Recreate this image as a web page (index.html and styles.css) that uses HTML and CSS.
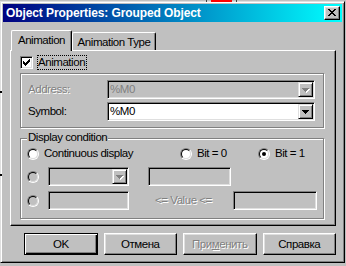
FILE: index.html
```html
<!DOCTYPE html>
<html>
<head>
<meta charset="utf-8">
<link rel="stylesheet" href="styles.css">
</head>
<body>
<div class="dialog">
  <div class="titlebar">
    <div class="title">Object Properties: Grouped Object</div>
    <div class="close">
      <svg width="8" height="7" viewBox="0 0 8 7" shape-rendering="crispEdges"><g fill="#000"><rect x="0" y="0" width="2" height="1"/><rect x="6" y="0" width="2" height="1"/><rect x="1" y="1" width="2" height="1"/><rect x="5" y="1" width="2" height="1"/><rect x="2" y="2" width="4" height="1"/><rect x="3" y="3" width="2" height="1"/><rect x="2" y="4" width="4" height="1"/><rect x="1" y="5" width="2" height="1"/><rect x="5" y="5" width="2" height="1"/><rect x="0" y="6" width="2" height="1"/><rect x="6" y="6" width="2" height="1"/></g></svg>
    </div>
  </div>
  <div class="content">
    <div class="tabs">
      <div class="tab tab-sel">Animation</div>
      <div class="tab tab-2">Animation Type</div>
    </div>
    <div class="panel">
      <div class="checkrow">
        <div class="cb">
          <svg width="7" height="7" viewBox="0 0 7 7" shape-rendering="crispEdges"><g fill="#000"><rect x="0" y="2" width="1" height="3"/><rect x="1" y="3" width="1" height="3"/><rect x="2" y="4" width="1" height="3"/><rect x="3" y="3" width="1" height="3"/><rect x="4" y="2" width="1" height="3"/><rect x="5" y="1" width="1" height="3"/><rect x="6" y="0" width="1" height="3"/></g></svg>
        </div>
        <div class="focus">Animation</div>
      </div>
      <div class="etched group1">
        <div class="frow">
          <div class="flabel disabled">Address:</div>
          <div class="combo combo-wide combo-dis">
            <div class="ctext disabled-plain">%M0</div>
            <div class="ddbtn">
              <svg width="8" height="5" viewBox="0 0 8 5" shape-rendering="crispEdges"><g fill="#fff"><rect x="1" y="1" width="7" height="1"/><rect x="2" y="2" width="5" height="1"/><rect x="3" y="3" width="3" height="1"/><rect x="4" y="4" width="1" height="1"/></g><g fill="#808080"><rect x="0" y="0" width="7" height="1"/><rect x="1" y="1" width="5" height="1"/><rect x="2" y="2" width="3" height="1"/><rect x="3" y="3" width="1" height="1"/></g></svg>
            </div>
          </div>
        </div>
        <div class="frow">
          <div class="flabel">Symbol:</div>
          <div class="combo combo-wide combo-white">
            <div class="ctext">%M0</div>
            <div class="ddbtn">
              <svg width="8" height="5" viewBox="0 0 8 5" shape-rendering="crispEdges"><g fill="#000"><rect x="0" y="0" width="7" height="1"/><rect x="1" y="1" width="5" height="1"/><rect x="2" y="2" width="3" height="1"/><rect x="3" y="3" width="1" height="1"/></g></svg>
            </div>
          </div>
        </div>
      </div>
      <div class="etched group2">
        <div class="legend">Display condition</div>
        <div class="radiorow">
          <div class="opt opt1"><span class="radio"><span class="rin"></span></span><span>Continuous display</span></div>
          <div class="opt opt2"><span class="radio"><span class="rin"></span></span><span>Bit = 0</span></div>
          <div class="opt"><span class="radio"><span class="rin"><span class="dot"></span></span></span><span>Bit = 1</span></div>
        </div>
        <div class="crow row2">
          <span class="radio"><span class="rin rin-gray"></span></span>
          <div class="combo combo-small combo-dis">
            <div class="ctext"></div>
            <div class="ddbtn">
              <svg width="8" height="5" viewBox="0 0 8 5" shape-rendering="crispEdges"><g fill="#fff"><rect x="1" y="1" width="7" height="1"/><rect x="2" y="2" width="5" height="1"/><rect x="3" y="3" width="3" height="1"/><rect x="4" y="4" width="1" height="1"/></g><g fill="#808080"><rect x="0" y="0" width="7" height="1"/><rect x="1" y="1" width="5" height="1"/><rect x="2" y="2" width="3" height="1"/><rect x="3" y="3" width="1" height="1"/></g></svg>
            </div>
          </div>
          <div class="tb tb-a"></div>
        </div>
        <div class="crow row3">
          <span class="radio"><span class="rin rin-gray"></span></span>
          <div class="tb tb-b"></div>
          <div class="vlabel disabled">&lt;= Value &lt;=</div>
          <div class="tb tb-c"></div>
        </div>
      </div>
    </div>
    <div class="buttons">
      <div class="btn btn-default">OK</div>
      <div class="btn">Отмена</div>
      <div class="btn disabled">При<u>м</u>енить</div>
      <div class="btn">Справка</div>
    </div>
  </div>
</div>
<div class="peek"><span class="pk-dark"></span><span class="pk-red"></span><span class="pk-dark"></span></div>
<div class="tick tick1"></div>
<div class="tick tick2"></div>
</body>
</html>
```

FILE: styles.css
```css
html, body {
  margin: 0;
  padding: 0;
}
body {
  width: 346px;
  height: 266px;
  overflow: hidden;
  position: relative;
  background: #c0c0c0;
  font-family: "Liberation Sans", Arial, sans-serif;
  font-size: 11.5px;
  letter-spacing: -0.45px;
  color: #000;
}
.dialog {
  box-sizing: border-box;
  width: 345px;
  height: 262px;
  margin-top: 1px;
  background: #c0c0c0;
  border: 1px solid;
  border-color: #dfdfdf #000 #000 #dfdfdf;
  box-shadow: inset 1px 1px #fff, inset -1px -1px #808080;
  padding: 2px;
  display: flex;
  flex-direction: column;
}
.titlebar {
  height: 18px;
  display: flex;
  align-items: center;
  background: linear-gradient(to right, #000080, #00ffff);
  color: #fff;
  font-weight: bold;
  font-size: 12px;
  letter-spacing: -0.1px;
  padding-left: 3px;
}
.title {
  flex: 1;
  line-height: 18px;
  white-space: nowrap;
}
.close {
  box-sizing: border-box;
  width: 16px;
  height: 14px;
  margin-right: 2px;
  background: #c0c0c0;
  border: 1px solid;
  border-color: #fff #000 #000 #fff;
  box-shadow: inset -1px -1px #808080, inset 1px 1px #dfdfdf;
}
.close svg {
  display: block;
  margin: 2px 0 0 3px;
}
.content {
  flex: 1;
  display: flex;
  flex-direction: column;
  padding: 8px 6px 0 7px;
}
.tabs {
  display: flex;
  align-items: flex-end;
  padding-left: 1px;
}
.tab {
  box-sizing: border-box;
  background: #c0c0c0;
  border-top: 1px solid #fff;
  border-left: 1px solid #fff;
  border-right: 1px solid #000;
  border-radius: 2px 2px 0 0;
  box-shadow: inset -1px 0 #808080;
  text-align: center;
  line-height: 13px;
  padding: 3px 0 1px;
  white-space: nowrap;
}
.tab-sel {
  width: 61px;
  padding-bottom: 4px;
  margin-bottom: -1px;
  position: relative;
  z-index: 1;
}
.tab-2 {
  width: 84px;
}
.panel {
  box-sizing: border-box;
  height: 176px;
  border: 1px solid;
  border-color: #fff #000 #000 #fff;
  box-shadow: inset -1px -1px #808080;
  padding: 4px 11px 6px 9px;
  display: flex;
  flex-direction: column;
}
.checkrow {
  height: 15px;
  display: flex;
  align-items: center;
}
.cb {
  box-sizing: border-box;
  width: 13px;
  height: 13px;
  background: #fff;
  border: 1px solid;
  border-color: #808080 #fff #fff #808080;
  box-shadow: inset 1px 1px #000, inset -1px -1px #dfdfdf;
}
.cb svg {
  display: block;
  margin: 2px 0 0 2px;
}
.focus {
  margin-left: 4px;
  border: 1px dotted #000;
  line-height: 13px;
  padding: 0 1px 0 0;
}
.etched {
  border: 1px solid #808080;
  box-shadow: inset 1px 1px #fff, 1px 1px #fff;
}
.group1 {
  margin-top: 3px;
  padding: 6px 8px 6px 7px;
  display: flex;
  flex-direction: column;
  gap: 3px;
}
.frow {
  display: flex;
  align-items: center;
  height: 19px;
}
.flabel {
  width: 79px;
  line-height: 19px;
}
.disabled {
  color: #808080;
  text-shadow: 1px 1px #fff;
}
.disabled-plain {
  color: #808080;
}
.combo {
  box-sizing: border-box;
  height: 19px;
  border: 1px solid;
  border-color: #808080 #fff #fff #808080;
  box-shadow: inset 1px 1px #000, inset -1px -1px #dfdfdf;
  padding: 1px;
  display: flex;
}
.combo-wide {
  width: 208px;
}
.combo-small {
  width: 81px;
}
.combo-white {
  background: #fff;
}
.combo-dis {
  background: #c0c0c0;
}
.ctext {
  flex: 1;
  line-height: 15px;
  padding-left: 1px;
  white-space: nowrap;
}
.ddbtn {
  box-sizing: border-box;
  width: 15px;
  height: 15px;
  background: #c0c0c0;
  border: 1px solid;
  border-color: #dfdfdf #000 #000 #dfdfdf;
  box-shadow: inset 1px 1px #fff, inset -1px -1px #808080;
  display: flex;
  align-items: center;
  justify-content: center;
}
.ddbtn svg {
  display: block;
  margin: 1px 0 0 1px;
}
.group2 {
  margin-top: 10px;
  padding: 0 0 8px 6px;
  display: flex;
  flex-direction: column;
}
.legend {
  align-self: flex-start;
  margin-top: -8px;
  padding: 0 1px;
  line-height: 13px;
  background: #c0c0c0;
}
.radiorow {
  margin-top: 3px;
  height: 13px;
  display: flex;
  align-items: center;
}
.opt {
  display: flex;
  align-items: center;
  gap: 5px;
  line-height: 13px;
  white-space: nowrap;
}
.opt1 {
  width: 153px;
}
.opt2 {
  width: 78px;
}
.radio {
  box-sizing: border-box;
  width: 12px;
  height: 12px;
  border-radius: 50%;
  border: 1px solid;
  border-color: #808080 #fff #fff #808080;
  display: flex;
  flex: none;
}
.rin {
  box-sizing: border-box;
  width: 10px;
  height: 10px;
  border-radius: 50%;
  border: 1px solid;
  border-color: #000 #dfdfdf #dfdfdf #000;
  background: #fff;
  display: flex;
  align-items: center;
  justify-content: center;
}
.rin-gray {
  background: #c0c0c0;
}
.dot {
  width: 4px;
  height: 4px;
  border-radius: 50%;
  background: #000;
}
.crow {
  display: flex;
  align-items: center;
  height: 19px;
}
.row2 {
  margin-top: 7px;
}
.row3 {
  margin-top: 5px;
}
.row2 .combo-small,
.row3 .tb-b {
  margin-left: 9px;
}
.tb {
  box-sizing: border-box;
  height: 19px;
  background: #c0c0c0;
  border: 1px solid;
  border-color: #808080 #fff #fff #808080;
  box-shadow: inset 1px 1px #000, inset -1px -1px #dfdfdf;
}
.tb-a {
  width: 83px;
  margin-left: 19px;
}
.tb-b {
  width: 81px;
}
.tb-c {
  width: 84px;
}
.vlabel {
  width: 78px;
  margin-left: 26px;
  line-height: 19px;
  white-space: nowrap;
}
.buttons {
  display: flex;
  gap: 6px;
  margin-top: 7px;
  padding-left: 14px;
}
.btn {
  box-sizing: border-box;
  width: 75px;
  height: 22px;
  border: 1px solid;
  border-color: #fff #000 #000 #fff;
  box-shadow: inset -1px -1px #808080, inset 1px 1px #dfdfdf;
  text-align: center;
  line-height: 20px;
  white-space: nowrap;
}
.btn-default {
  border-color: #000;
  box-shadow: inset 1px 1px #fff, inset -1px -1px #000, inset -2px -2px #808080;
}
.btn u {
  text-decoration-thickness: 1px;
  text-underline-offset: 1px;
}
.peek {
  position: absolute;
  top: 0;
  left: 206px;
  display: flex;
  gap: 4px;
  height: 2px;
  z-index: 5;
}
.pk-dark {
  width: 1px;
  background: #404040;
}
.pk-red {
  width: 21px;
  background: #ff0000;
}
.tick {
  position: absolute;
  left: 0;
  width: 2px;
  height: 2px;
  background: #000;
}
.tick1 {
  top: 91px;
}
.tick2 {
  top: 174px;
}
```
